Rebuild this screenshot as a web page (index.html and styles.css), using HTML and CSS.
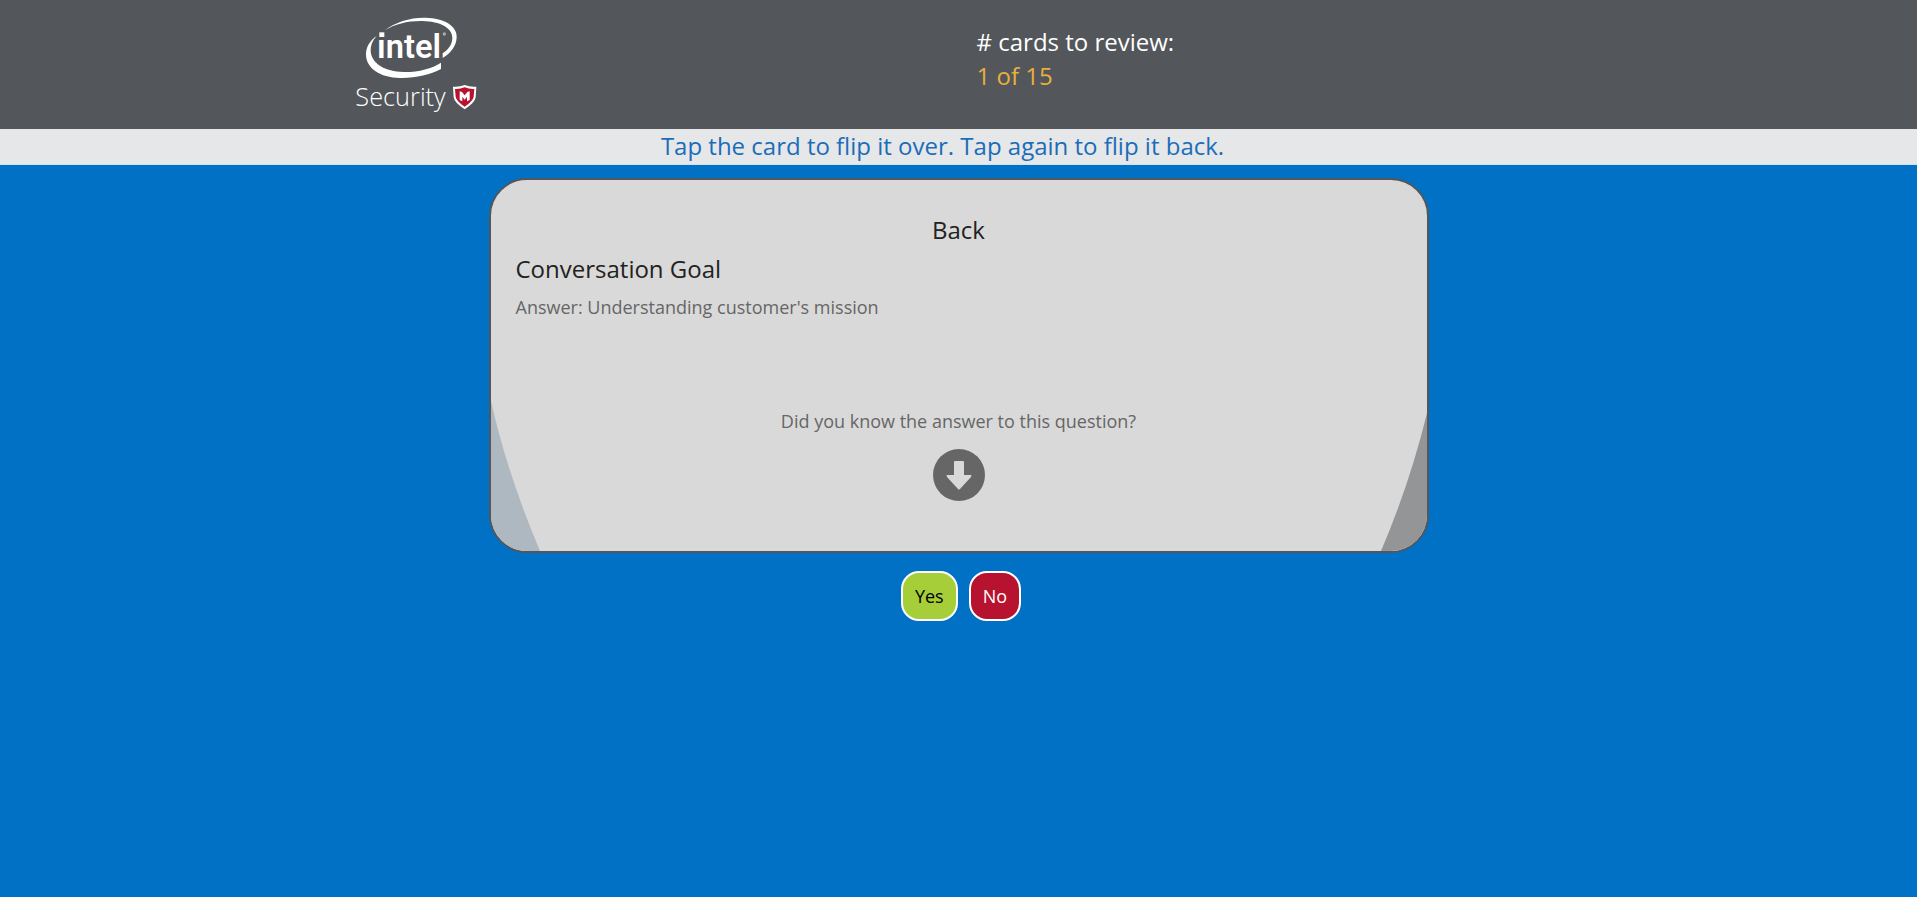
FILE: index.html
```html
<!DOCTYPE html>
<html lang="en">
<head>
<meta charset="utf-8">
<meta name="viewport" content="width=device-width, initial-scale=1">
<title>Flash Cards</title>
<link rel="stylesheet" href="styles.css">
</head>
<body>
<header class="header">
  <div class="header-inner">
    <div class="header-logo">
      <svg class="logo" viewBox="0 0 450 375" role="img" aria-label="Intel Security">
        <path class="logo-ring" d="M135 91C165 66 212 52 256 53C314 55 352 78 350 112C349 138 333 160 308 174L308 160C326 148 337 132 337 113C337 84 300 64 248 63C205 62 164 72 135 91Z"/>
        <path class="logo-ring" d="M110 108C97 122 91 138 92 153C94 191 136 215 190 216C234 217 275 206 303 188L303 207C270 224 226 235 180 234C120 233 79 204 78 165C77 142 90 122 110 108Z"/>
        <rect class="logo-ring" x="118" y="97" width="15" height="14"/>
        <text class="logo-intel" x="111" y="174">ıntel</text>
        <circle class="logo-mark" cx="313" cy="102" r="5"/>
        <text class="logo-security" x="46" y="317">Security</text>
        <path class="logo-ring" d="M339 260Q357 262 374 255Q391 262 409 260L407 292Q405 308 374 328Q343 308 341 292Z"/>
        <path class="logo-shield" d="M345 267Q360 268 374 262Q388 268 403 267L401 290Q399 303 374 320Q349 303 347 290Z"/>
        <path class="logo-ring" d="M359 274L366 276L374 286L382 276L389 274V300L381 304V290L374 299L367 290V304L359 300Z"/>
      </svg>
    </div>
    <div class="counter">
      <div>#&nbsp;cards to review:</div>
      <div class="counter-value">1 of 15</div>
    </div>
  </div>
</header>
<p class="hint">Tap the card to flip it over. Tap again to flip it back.</p>
<main class="main">
  <section class="card">
    <svg class="card-corner card-corner-left" viewBox="0 0 50 150" aria-hidden="true"><path d="M0 0Q16 72 49 150H0Z"/></svg>
    <svg class="card-corner card-corner-right" viewBox="0 0 46 138" aria-hidden="true"><path d="M46 0Q29 70 0 138H46Z"/></svg>
    <h2 class="card-side">Back</h2>
    <h3 class="card-title">Conversation Goal</h3>
    <p class="card-answer">Answer: Understanding customer's mission</p>
    <p class="card-question">Did you know the answer to this question?</p>
    <svg class="card-arrow" viewBox="0 0 52 52" aria-hidden="true">
      <circle cx="26" cy="26" r="26"/>
      <path d="M22 12H30Q31 12 31 13V26H38Q39 26 38 28L27 40Q26 41 25 40L14 28Q13 26 14 26H21V13Q21 12 22 12Z"/>
    </svg>
  </section>
  <div class="actions">
    <button class="btn btn-yes" type="button">Yes</button>
    <button class="btn btn-no" type="button">No</button>
  </div>
</main>
</body>
</html>
```

FILE: styles.css
```css
* { box-sizing: border-box; }

body {
  margin: 0;
  background: #0071c5;
  font-family: "Open Sans", "Noto Sans", sans-serif;
  font-size: 18px;
  color: #666;
}

h2, h3, p { margin: 0; }

.header { background: #53565a; }

.header-inner {
  display: grid;
  grid-template-columns: 1fr 1fr;
  max-width: 1238px;
  margin: 0 auto;
}

.logo {
  display: block;
  width: 150px;
  height: 125px;
  margin-bottom: 4px;
}

.logo-ring { fill: #fff; }
.logo-mark { fill: #aaacae; }
.logo-shield { fill: #b7122f; }

.logo-intel {
  fill: #fff;
  font: 600 98px Roboto, sans-serif;
}

.logo-security {
  fill: #fff;
  font: 300 76px "Open Sans", sans-serif;
}

.counter {
  padding: 25px 18px 0;
  color: #fff;
  font-size: 24px;
  font-weight: 500;
  line-height: 34px;
}

.counter-value { color: #e8b03a; }

.hint {
  padding: 0 32px 2px 0;
  border-bottom: 1px solid #cfe3f3;
  background: #e6e7e8;
  color: #1b6db9;
  font-size: 24px;
  line-height: 33px;
  text-align: center;
}

.main {
  max-width: 940px;
  margin: 0 auto;
  padding-top: 13px;
}

.card {
  position: relative;
  overflow: hidden;
  min-height: 375px;
  padding: 30px 25px;
  border: 2px solid #53565a;
  border-radius: 38px;
  background: #d9d9d9;
}

.card-corner { position: absolute; bottom: 0; }

.card-corner-left {
  left: 0;
  width: 50px;
  height: 150px;
  fill: #aeb8c0;
}

.card-corner-right {
  right: 0;
  width: 46px;
  height: 138px;
  fill: #939597;
}

.card-side,
.card-title {
  color: #222;
  font-size: 24px;
  font-weight: 400;
  line-height: 39px;
}

.card-side { text-align: center; }

.card-answer,
.card-question { line-height: 38px; }

.card-question {
  margin-top: 76px;
  text-align: center;
}

.card-arrow {
  display: block;
  width: 52px;
  height: 52px;
  margin: 9px auto 0;
  fill: #666;
}

.card-arrow path { fill: #d9d9d9; }

.actions {
  display: flex;
  justify-content: center;
  gap: 11px;
  padding: 18px 0 0 5px;
}

.btn {
  height: 50px;
  padding: 0 12px;
  border: 2px solid #fff;
  border-radius: 18px;
  font: inherit;
  cursor: pointer;
}

.btn-yes {
  background: #a6ce39;
  color: #000;
}

.btn-no {
  background: #b7122f;
  color: #fff;
}
```
